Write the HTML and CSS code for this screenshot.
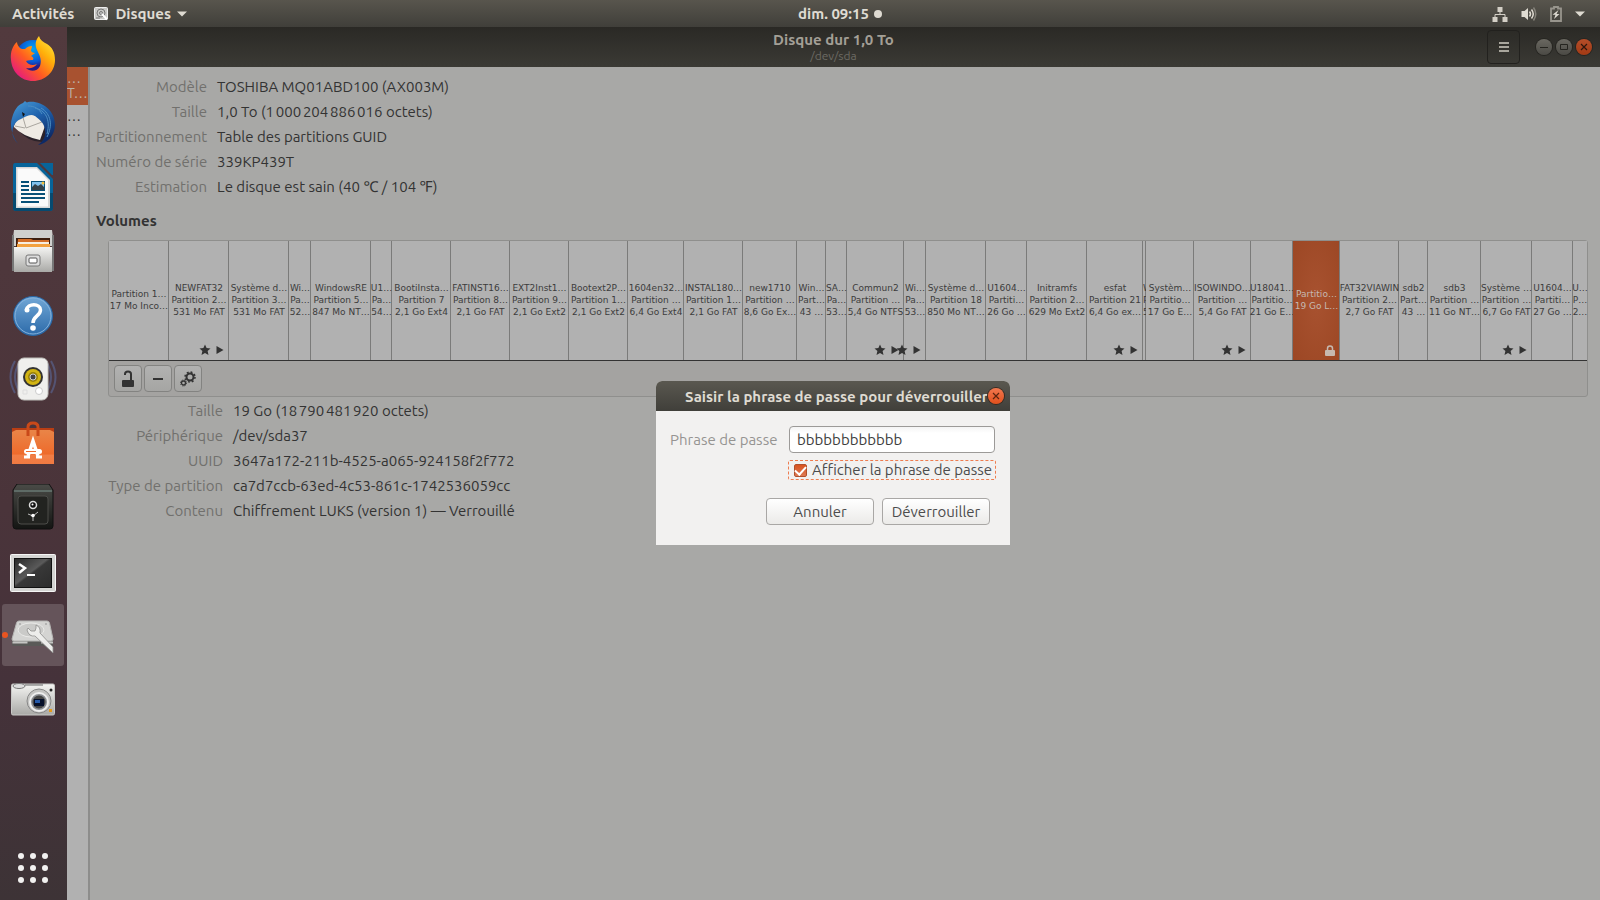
FILE: index.html
```
<!DOCTYPE html>
<html lang="fr">
<head>
    <meta charset="utf-8">
    <title>Disques</title>
    <link rel="stylesheet" href="styles.css">
</head>
<body>
    <svg class="defs" aria-hidden="true">
        <defs>
            <symbol id="star" viewBox="0 0 12 12"><path d="M6 0.5l1.6 3.6 3.9.4-2.9 2.6.9 3.9L6 9l-3.5 2 .9-3.9L.5 4.500l3.900-.4z"/></symbol>
            <symbol id="play" viewBox="0 0 8 10"><path d="M0.5 1l7 4-7 4z"/></symbol>
            <linearGradient id="metal" x2="0" y2="1"><stop offset="0" stop-color="#f4f4f2"/><stop offset="1" stop-color="#a9a9a6"/></linearGradient>
            <linearGradient id="fox" x1="1" y1="0" x2="0.1" y2="0.9"><stop offset="0" stop-color="#fff44f"/><stop offset="0.35" stop-color="#ffb10a"/><stop offset="0.65" stop-color="#ff5b22"/><stop offset="1" stop-color="#e31587"/></linearGradient>
            <radialGradient id="globe" cx="0.5" cy="0.25"><stop offset="0" stop-color="#00a5f5"/><stop offset="0.7" stop-color="#0a5ad6"/><stop offset="1" stop-color="#2a1c85"/></radialGradient>
            <linearGradient id="bird" x2="0.6" y2="1"><stop offset="0" stop-color="#4ba0da"/><stop offset="0.5" stop-color="#1f62ad"/><stop offset="1" stop-color="#0d2a66"/></linearGradient>
            <linearGradient id="help" x2="0" y2="1"><stop offset="0" stop-color="#71a7d6"/><stop offset="1" stop-color="#2c6aa9"/></linearGradient>
            <linearGradient id="bag" x2="0" y2="1"><stop offset="0" stop-color="#e98548"/><stop offset="0.7" stop-color="#ee6b2c"/><stop offset="0.75" stop-color="#f17e46"/><stop offset="1" stop-color="#ef7a42"/></linearGradient>
            <linearGradient id="dark" x2="0" y2="1"><stop offset="0" stop-color="#4a4b47"/><stop offset="1" stop-color="#141513"/></linearGradient>
            <linearGradient id="screen" x2="1" y2="1"><stop offset="0" stop-color="#2a2a2a"/><stop offset="0.45" stop-color="#5a5a5a"/><stop offset="0.5" stop-color="#383838"/><stop offset="1" stop-color="#2c2c2c"/></linearGradient>
        </defs>
    </svg>

    <header class="topbar">
        <div class="topbar-left">
            <a href="#" class="activities">Activités</a>
            <a href="#" class="app-menu">
                <svg width="15" height="14" viewBox="0 0 15 14"><rect x="0.5" y="0.5" width="13" height="12" rx="1" fill="#c9c9c6" stroke="#eee"/><circle cx="7" cy="6" r="4" fill="none" stroke="#777"/><circle cx="7" cy="6" r="1.5" fill="none" stroke="#777"/><path d="M8 7l5 5.500" stroke="#fff" stroke-width="2"/><path d="M2 11h4" stroke="#777"/></svg>
                Disques
                <svg width="10" height="6" viewBox="0 0 10 6"><path d="M0 0.500h10L5 5.500z" fill="#dfdbd2"/></svg>
            </a>
        </div>
        <div class="clock">dim. 09:15</div>
        <div class="status">
            <svg width="16" height="16" viewBox="0 0 16 16" fill="#d3cfc6"><path d="M5.500 1h5v5h-5zM.5 11h5v5h-5zM10.500 11h5v5h-5z"/><path d="M8 5v3.500M3 12V8.500h10V12" fill="none" stroke="#d3cfc6"/></svg>
            <svg width="16" height="16" viewBox="0 0 16 16"><path d="M0.500 5h3L7 2v12l-3.500-3h-3z" fill="#dfdbd2"/><path d="M8.500 5.500q2 2.500 0 5M10.500 3.500q3.500 4.500 0 9" fill="none" stroke="#dfdbd2" stroke-width="1.500"/><path d="M12.500 1.500q4.500 6.500 0 13" fill="none" stroke="#85827a" stroke-width="1.500"/></svg>
            <svg width="12" height="16" viewBox="0 0 12 16"><path d="M4 1h4v1.500h3v12.500H1V2.500h3z" fill="none" stroke="#98958d" stroke-width="1.800"/><path d="M8.500 4L2.500 8.800h3L4 13l5.500-5h-3z" fill="#dfdbd2"/></svg>
            <svg width="10" height="6" viewBox="0 0 10 6"><path d="M0 0.500h10L5 5.500z" fill="#dfdbd2"/></svg>
        </div>
    </header>

    <div class="desktop">
        <nav class="dock">
            <a href="#" class="dock-item" aria-label="Firefox">
                <svg width="46" height="46" viewBox="0 0 46 46"><circle cx="23" cy="22" r="18" fill="url(#globe)"/><path d="M29 0c-4 5-4 9-2 14 3 6 5 10 3 16-3 6-10 6-14 2 4 1 8 0 11-4-4 2-9 1-11-3 2-1 5-1 7-1 1-2 0-3-2-4l4-3c-2 0-3-1-4-2 0-2 1-3 1-5-3 0-5 1-7 3-2 0-4 0-5-1-2-2-3-4-3-6C3 9 0 16 1 24c1 12 10 21 22 21s22-9 22-21c0-8-3-13-8-16C33 6 30 4 29 0z" fill="url(#fox)"/></svg>
            </a>
            <a href="#" class="dock-item" aria-label="Thunderbird">
                <svg width="46" height="46" viewBox="0 0 46 46"><path d="M8 30q10 12 24 12l6-8-4-14z" fill="#2b2229"/><path d="M4 26Q8 14 20 14l14 4 1 8-5 14Q12 36 4 27z" fill="#efebe4"/><path d="M12 14l4 14 16-6M15 28l-10-2" fill="none" stroke="#aaa69f"/><path d="M13 3l2-2c1 1 2 2 3 1 13-2 27 8 27 23 0 10-8 19-17 20 6-4 8-9 7-15-1-7-4-9-10-14-5-3-10 1-14 3-3 1-6 3-8 9-2 7 1 11 5 16C3 37-1 27 2 18 4 11 7 5 13 3z" fill="url(#bird)"/><path d="M25 8c10 2 16 11 12 26M31 8c10 6 12 17 6 29M18 6c7 0 11 3 14 8" fill="none" stroke="#4d8fc4"/><path d="M12 12l3 2-2 3z" fill="#111"/></svg>
            </a>
            <a href="#" class="dock-item" aria-label="LibreOffice Writer">
                <svg width="42" height="48" viewBox="0 0 42 48"><path d="M3 0h22l16 16v29q0 3-3 3H4q-3 0-3-3V3q0-3 2-3z" fill="#07649a"/><path d="M1 30h40v15q0 3-3 3H4q-3 0-3-3z" fill="#064a70"/><path d="M28 0h13v12h-1z" fill="#07649a"/><path d="M4 4h21l13 13v28H4z" fill="#d7d7d7"/><path d="M5.500 5.500h19L36 17v26.500H5.500z" fill="#fafafa"/><path d="M9 19h8M9 23h8M9 27h8M9 31h24M9 35h24M9 39h18" stroke="#075078" stroke-width="2"/><path d="M19 18h14v10H19z" fill="#075078"/><path d="M20 19h12v8H20z" fill="#82c3ef"/><path d="M20 27v-3l3-3 3 2 3-2 3 3v3z" fill="#354148"/><circle cx="31" cy="20" r="1.500" fill="#f4be3a"/></svg>
            </a>
            <a href="#" class="dock-item" aria-label="Fichiers">
                <svg width="42" height="44" viewBox="0 0 42 44"><path d="M2 1h38l2 16H0z" fill="#cfcfcd"/><path d="M4 9h34v10H4z" fill="#3c1e0f"/><path d="M6 10h13l2 1h16v8H5z" fill="#d26d28"/><path d="M6 13h31v4H6z" fill="#f6eddf"/><path d="M5 15h33v4H5z" fill="#f3a13e"/><path d="M0 6h2v36H0zM40 6h2v36h-2z" fill="#777"/><path d="M2 18h38v25H2z" fill="url(#metal)"/><rect x="14" y="26" width="14" height="11" rx="2" fill="#ddd" stroke="#777"/><rect x="17" y="29" width="8" height="5" rx="1" fill="#fff" stroke="#555"/></svg>
            </a>
            <a href="#" class="dock-item" aria-label="Aide">
                <svg width="42" height="44" viewBox="0 -2 42 44"><circle cx="21" cy="21" r="19.500" fill="url(#help)" stroke="#2767a7"/><circle cx="21" cy="21" r="18" fill="none" stroke="#84b2dc"/><path d="M14.500 15c1-7 14-7 14 0 0 6-7.500 6-7.500 13" fill="none" stroke="#fff" stroke-width="3.500"/><circle cx="15" cy="15" r="2.500" fill="#fff"/><circle cx="21" cy="33" r="2.800" fill="#fff"/></svg>
            </a>
            <a href="#" class="dock-item" aria-label="Rhythmbox">
                <svg width="48" height="46" viewBox="0 0 48 46"><g fill="none" stroke="#59618c" stroke-width="2" opacity="0.700"><path d="M6 5q-9 16 0 32M10 7q-8 14 0 28M42 5q9 16 0 32M38 7q8 14 0 28"/></g><rect x="9" y="2" width="30" height="42" rx="6" fill="#efefed" stroke="#bebeba"/><circle cx="24" cy="21" r="10" fill="#333"/><circle cx="24" cy="21" r="8" fill="#d2b413"/><circle cx="24" cy="21" r="5" fill="#9b830b"/><circle cx="24" cy="21" r="3" fill="#444" stroke="#ccc"/><circle cx="30" cy="35" r="3.500" fill="#fff" stroke="#ccc"/><path d="M14 34h4v4h-4z" fill="none" stroke="#ddd"/></svg>
            </a>
            <a href="#" class="dock-item" aria-label="Logiciels Ubuntu">
                <svg width="42" height="44" viewBox="0 0 42 44"><path d="M0 7h42v7H0z" fill="#b93e14"/><path d="M0 11l4-2h34l4 2v32H0z" fill="url(#bag)"/><path d="M16 15V6q0-4 5-4t5 4v9" fill="none" stroke="#c94919" stroke-width="3"/><path d="M16 35l5-15 5 15" fill="none" stroke="#fff" stroke-width="3.500"/><path d="M12 36h6M24 36h6" stroke="#fff" stroke-width="3"/><rect x="12" y="28" width="18" height="5" rx="2.500" fill="#fff"/><path d="M14 30.500h10" stroke="#ef6c2e"/></svg>
            </a>
            <a href="#" class="dock-item" aria-label="Coffre">
                <svg width="42" height="46" viewBox="0 0 42 46"><path d="M5 0h32l4 6v36q0 3-3 3H4q-3 0-3-3V6z" fill="url(#dark)" stroke="#111"/><path d="M2 6h38v2H2z" fill="#5e6b66"/><rect x="6" y="12" width="30" height="28" rx="3" fill="#222320" stroke="#4c4d49"/><circle cx="21" cy="21" r="3.500" fill="#111" stroke="#ddd" stroke-width="1.500"/><circle cx="20.500" cy="20.500" r="1" fill="#fff"/><path d="M21 32v5M21 32l-5-2M21 32l5-4" stroke="#bbb"/><circle cx="21" cy="31.500" r="1.800" fill="#fff"/></svg>
            </a>
            <a href="#" class="dock-item" aria-label="Terminal">
                <svg width="46" height="42" viewBox="0 -4 46 42"><rect x="0.500" y="0.500" width="45" height="37" rx="1" fill="#d4d4d2" stroke="#f5f5f5"/><rect x="4" y="4" width="38" height="30" fill="#111"/><rect x="5" y="5" width="36" height="28" fill="url(#screen)"/><path d="M9 10l6 4-6 5" fill="none" stroke="#fff" stroke-width="2.500"/><path d="M17 21h8" stroke="#fff" stroke-width="2"/></svg>
            </a>
            <a href="#" class="dock-item dock-item-active" aria-label="Disques">
                <svg width="44" height="36" viewBox="0 0 44 36"><path d="M1 23h41v5q0 1-2 1H3q-2 0-2-1z" fill="#5a5a58"/><path d="M8 4h28q2 0 2.500 2L42 22q0 2-2 2H3q-2 0-2-2L5.500 6Q6 4 8 4z" fill="#d4d4d2" stroke="#b5b5b3"/><ellipse cx="20" cy="13" rx="13" ry="7" fill="#cacac8" stroke="#e9e9e7"/><path d="M1.500 25.500h15M30 25.500h12" stroke="#c5c5c3" stroke-width="2"/><circle cx="9" cy="7" r="0.800" fill="#888"/><circle cx="35" cy="7" r="0.800" fill="#888"/><path d="M25 8q5 2 4 8l13 14v6L24 19q-6 1-8-6l1-2 3 3 4 0 1-3z" fill="#ededeb" stroke="#8d8d8b" stroke-width="0.800"/></svg>
            </a>
            <a href="#" class="dock-item" aria-label="Photos">
                <svg width="44" height="34" viewBox="0 0 44 34"><rect x="0.500" y="2" width="43" height="31" rx="1.500" fill="url(#metal)" stroke="#c8c8c6"/><path d="M14 3h18" stroke="#666"/><ellipse cx="8" cy="4" rx="6" ry="2.500" fill="#ddd" stroke="#777"/><circle cx="40" cy="8" r="1.500" fill="#222"/><path d="M38 27h3v3h-3z" fill="#e69a18"/><circle cx="28" cy="19" r="12" fill="#c4c4c2" stroke="#888"/><circle cx="28" cy="20" r="9" fill="#8b8e92" stroke="#eee" stroke-width="2"/><circle cx="28" cy="20" r="6.500" fill="#444"/><path d="M23 17h10v7H23z" fill="#06102a"/><path d="M24 18h5v3h-5z" fill="#2458a8"/></svg>
            </a>
            <a href="#" class="dock-item show-apps" aria-label="Afficher les applications">
                <svg width="32" height="32" viewBox="0 0 32 32" fill="#f2f1f0"><circle cx="4" cy="4" r="3"/><circle cx="16" cy="4" r="3"/><circle cx="28" cy="4" r="3"/><circle cx="4" cy="16" r="3"/><circle cx="16" cy="16" r="3"/><circle cx="28" cy="16" r="3"/><circle cx="4" cy="28" r="3"/><circle cx="16" cy="28" r="3"/><circle cx="28" cy="28" r="3"/></svg>
            </a>
        </nav>

        <main class="window">
            <header class="titlebar">
                <div class="window-title">
                    <h1>Disque dur 1,0 To</h1>
                    <p>/dev/sda</p>
                </div>
                <div class="window-controls">
                    <button class="menu-button" aria-label="Menu"><svg width="10" height="10" viewBox="0 0 10 10"><path d="M0 1h10M0 5h10M0 9h10" stroke="#a9a69d" stroke-width="2"/></svg></button>
                    <button class="round" aria-label="Réduire"><svg width="16" height="16" viewBox="0 0 16 16"><path d="M4 8.500h8" stroke="#25241f"/></svg></button>
                    <button class="round" aria-label="Agrandir"><svg width="16" height="16" viewBox="0 0 16 16"><path d="M4.500 5.500h7v5h-7z" fill="none" stroke="#25241f"/></svg></button>
                    <button class="round round-close" aria-label="Fermer"><svg width="16" height="16" viewBox="0 0 16 16"><path d="M5 5l6 6M11 5l-6 6" stroke="#2d160d" stroke-width="1.200"/></svg></button>
                </div>
            </header>

            <div class="window-body">
                <aside class="drives">
                    <a href="#" class="drive drive-selected"><span>…</span><span>T…</span></a>
                    <a href="#" class="drive"><span>…</span><span>…</span></a>
                </aside>

                <section class="details">
                    <dl class="info">
                        <dt>Modèle</dt><dd>TOSHIBA MQ01ABD100 (AX003M)</dd>
                        <dt>Taille</dt><dd>1,0 To (1&#8239;000&#8239;204&#8239;886&#8239;016 octets)</dd>
                        <dt>Partitionnement</dt><dd>Table des partitions GUID</dd>
                        <dt>Numéro de série</dt><dd>339KP439T</dd>
                        <dt>Estimation</dt><dd>Le disque est sain (40 ℃ / 104 ℉)</dd>
                    </dl>

                    <h2>Volumes</h2>
                    <div class="volumes">
                        <div class="partitions">
                            <div class="part" style="flex-grow: 60"><p>Partition 1…<br>17 Mo Inco…</p></div>
                            <div class="part" style="flex-grow: 60"><p>NEWFAT32<br>Partition 2…<br>531 Mo FAT</p><span class="flags"><svg class="star"><use href="#star"/></svg><svg class="play"><use href="#play"/></svg></span></div>
                            <div class="part" style="flex-grow: 60"><p>Système d…<br>Partition 3…<br>531 Mo FAT</p></div>
                            <div class="part" style="flex-grow: 22"><p>Wi…<br>Pa…<br>52…</p></div>
                            <div class="part" style="flex-grow: 60"><p>WindowsRE<br>Partition 5…<br>847 Mo NT…</p></div>
                            <div class="part" style="flex-grow: 21"><p>U1…<br>Pa…<br>54…</p></div>
                            <div class="part" style="flex-grow: 59"><p>BootiInsta…<br>Partition 7<br>2,1 Go Ext4</p></div>
                            <div class="part" style="flex-grow: 59"><p>FATINST16…<br>Partition 8…<br>2,1 Go FAT</p></div>
                            <div class="part" style="flex-grow: 59"><p>EXT2Inst1…<br>Partition 9…<br>2,1 Go Ext2</p></div>
                            <div class="part" style="flex-grow: 59"><p>Bootext2P…<br>Partition 1…<br>2,1 Go Ext2</p></div>
                            <div class="part" style="flex-grow: 56"><p>1604en32…<br>Partition …<br>6,4 Go Ext4</p></div>
                            <div class="part" style="flex-grow: 59"><p>INSTAL180…<br>Partition 1…<br>2,1 Go FAT</p></div>
                            <div class="part" style="flex-grow: 54"><p>new1710<br>Partition …<br>8,6 Go Ex…</p></div>
                            <div class="part" style="flex-grow: 29"><p>Win…<br>Part…<br>43 …</p></div>
                            <div class="part" style="flex-grow: 21"><p>SA…<br>Pa…<br>53…</p></div>
                            <div class="part" style="flex-grow: 57"><p>Commun2<br>Partition …<br>5,4 Go NTFS</p><span class="flags"><svg class="star"><use href="#star"/></svg><svg class="play"><use href="#play"/></svg></span></div>
                            <div class="part" style="flex-grow: 22"><p>Wi…<br>Pa…<br>53…</p><span class="flags"><svg class="star"><use href="#star"/></svg><svg class="play"><use href="#play"/></svg></span></div>
                            <div class="part" style="flex-grow: 60"><p>Système d…<br>Partition 18<br>850 Mo NT…</p></div>
                            <div class="part" style="flex-grow: 41"><p>U1604…<br>Partiti…<br>26 Go …</p></div>
                            <div class="part" style="flex-grow: 60"><p>Initramfs<br>Partition 2…<br>629 Mo Ext2</p></div>
                            <div class="part" style="flex-grow: 56"><p>esfat<br>Partition 21<br>6,4 Go ex…</p><span class="flags"><svg class="star"><use href="#star"/></svg><svg class="play"><use href="#play"/></svg></span></div>
                            <div class="part part-sliver" style="flex-grow: 3"><p>W<br>P<br>5</p></div>
                            <div class="part" style="flex-grow: 48"><p>Systèm…<br>Partitio…<br>17 Go E…</p></div>
                            <div class="part" style="flex-grow: 57"><p>ISOWINDO…<br>Partition …<br>5,4 Go FAT</p><span class="flags"><svg class="star"><use href="#star"/></svg><svg class="play"><use href="#play"/></svg></span></div>
                            <div class="part" style="flex-grow: 42"><p>U18041…<br>Partitio…<br>21 Go E…</p></div>
                            <div class="part part-selected" style="flex-grow: 47"><p>Partitio…<br>19 Go L…</p><span class="flags"><svg width="10" height="11" viewBox="0 0 10 11"><path d="M2.500 6V3.500q0-2.500 2.500-2.500t2.500 2.500V6" fill="none" stroke="#c6b9b0" stroke-width="1.500"/><rect y="5" width="10" height="6" rx="1"/></svg></span></div>
                            <div class="part" style="flex-grow: 59"><p>FAT32VIAWIN<br>Partition 2…<br>2,7 Go FAT</p></div>
                            <div class="part" style="flex-grow: 29"><p>sdb2<br>Part…<br>43 …</p></div>
                            <div class="part" style="flex-grow: 53"><p>sdb3<br>Partition …<br>11 Go NT…</p></div>
                            <div class="part" style="flex-grow: 51"><p>Système …<br>Partition …<br>6,7 Go FAT</p><span class="flags"><svg class="star"><use href="#star"/></svg><svg class="play"><use href="#play"/></svg></span></div>
                            <div class="part" style="flex-grow: 41"><p>U1604…<br>Partiti…<br>27 Go …</p></div>
                            <div class="part" style="flex-grow: 14"><p>U…<br>P…<br>2…</p></div>
                        </div>
                        <div class="toolbar">
                            <button aria-label="Déverrouiller la partition"><svg width="14" height="18" viewBox="0 0 14 18"><path d="M4 5V4q0-2.500 3-2.500t3 2.500v6" fill="none" stroke="#333" stroke-width="2"/><rect x="1" y="10" width="12" height="7" rx="1" fill="#333"/></svg></button>
                            <button aria-label="Supprimer la partition"><svg width="10" height="2" viewBox="0 0 10 2"><path d="M0 1h10" stroke="#333" stroke-width="2"/></svg></button>
                            <button aria-label="Options de partition"><svg width="16" height="16" viewBox="0 0 16 16" fill="none" stroke="#333"><circle cx="10" cy="6" r="3.500" stroke-width="2"/><circle cx="10" cy="6" r="5" stroke-width="1.500" stroke-dasharray="1.900 2.027"/><circle cx="3.500" cy="12" r="2" stroke-width="1.300"/><circle cx="3.500" cy="12" r="3" stroke-dasharray="1.200 1.156"/></svg></button>
                        </div>
                    </div>

                    <dl class="info info-volume">
                        <dt>Taille</dt><dd>19 Go (18&#8239;790&#8239;481&#8239;920 octets)</dd>
                        <dt>Périphérique</dt><dd>/dev/sda37</dd>
                        <dt>UUID</dt><dd>3647a172-211b-4525-a065-924158f2f772</dd>
                        <dt>Type de partition</dt><dd>ca7d7ccb-63ed-4c53-861c-1742536059cc</dd>
                        <dt>Contenu</dt><dd>Chiffrement LUKS (version 1) — Verrouillé</dd>
                    </dl>
                </section>
            </div>

            <div class="overlay">
                <form class="dialog" role="dialog" aria-labelledby="dialog-title">
                    <header class="dialog-header">
                        <h2 id="dialog-title">Saisir la phrase de passe pour déverrouiller</h2>
                        <button type="button" class="round dialog-close" aria-label="Fermer"><svg width="16" height="16" viewBox="0 0 16 16"><path d="M5 5l6 6M11 5l-6 6" stroke="#5b2410" stroke-width="1.200"/></svg></button>
                    </header>
                    <div class="dialog-fields">
                        <label for="passphrase" class="field-label">Phrase de passe</label>
                        <input type="text" id="passphrase" class="entry" value="bbbbbbbbbbbb">
                        <label class="show-pass"><input type="checkbox" checked>Afficher la phrase de passe</label>
                    </div>
                    <div class="dialog-actions">
                        <button type="button">Annuler</button>
                        <button type="button">Déverrouiller</button>
                    </div>
                </form>
            </div>
        </main>
    </div>
</body>
</html>
```
FILE: styles.css
```
* {
    box-sizing: border-box;
}
body {
    margin: 0;
    min-height: 100vh;
    display: flex;
    flex-direction: column;
    font-family: Ubuntu, "Noto Sans", sans-serif;
    font-size: 15px;
    line-height: 25px;
    color: #333;
    background: #a8a8a6;
}
h1, h2, p, dl, dd {
    margin: 0;
}
h1, h2 {
    font-size: 15px;
}
a {
    color: inherit;
    text-decoration: none;
}
button, input {
    font: inherit;
    color: inherit;
    margin: 0;
    padding: 0;
}
svg {
    display: block;
    flex-shrink: 0;
}
.defs {
    position: absolute;
    width: 0;
    height: 0;
}

/* top panel */
.topbar {
    display: flex;
    height: 27px;
    line-height: 27px;
    font-weight: bold;
    color: #dfdbd2;
    background: linear-gradient(#58554d, #403f3a);
}
.topbar-left {
    flex: 1 1 82px;
    display: flex;
    gap: 20px;
    padding-left: 12px;
}
.app-menu {
    display: flex;
    align-items: center;
    gap: 6px;
}
.clock {
    display: flex;
    align-items: center;
    gap: 5px;
}
.clock::before, .clock::after {
    content: "";
    width: 8px;
    height: 8px;
    border-radius: 50%;
}
.clock::after {
    background: #dfdbd2;
}
.status {
    flex: 1 1 15px;
    display: flex;
    align-items: center;
    justify-content: flex-end;
    gap: 13px;
    padding-right: 15px;
}

/* dock */
.desktop {
    flex: 1;
    display: flex;
}
.dock {
    width: 67px;
    display: flex;
    flex-direction: column;
    gap: 2px;
    padding: 1px 3px 1px 2px;
    background: linear-gradient(#523a3e, #4a343a 55%, #45323a 75%, #3d3336);
}
.dock-item {
    height: 62px;
    display: flex;
    align-items: center;
    justify-content: center;
    border-radius: 3px;
}
.dock-item-active {
    position: relative;
    background: #65545a;
}
.dock-item-active::before {
    content: "";
    position: absolute;
    left: 0;
    top: 28px;
    width: 6px;
    height: 6px;
    border-radius: 50%;
    background: #e95420;
}
.show-apps {
    margin-top: auto;
}

/* main window, dimmed by the modal dialog */
.window {
    position: relative;
    flex: 1;
    min-width: 0;
    display: flex;
    flex-direction: column;
}
.titlebar {
    display: grid;
    grid-template-columns: 1fr auto 1fr;
    align-items: center;
    height: 40px;
    padding: 0 8px;
    background: linear-gradient(#2a2925, #3b3a35);
}
.window-title {
    grid-column: 2;
    text-align: center;
    line-height: 16px;
    color: #a39f96;
}
.window-title p {
    font-size: 12px;
    line-height: 15px;
    color: #6c6a63;
}
.window-controls {
    display: flex;
    align-items: center;
    justify-content: flex-end;
    gap: 4px;
}
.menu-button {
    width: 33px;
    height: 34px;
    margin-right: 12px;
    display: flex;
    align-items: center;
    justify-content: center;
    background: none;
    border: 1px solid #22211e;
    border-radius: 4px;
}
.round {
    width: 16px;
    height: 16px;
    border: none;
    border-radius: 50%;
    background: linear-gradient(#6a6861, #4b4a45);
    box-shadow: 0 0 0 1px #262521;
}
.round-close {
    background: linear-gradient(#b44d29, #a33a14);
}
.window-body {
    flex: 1;
    display: flex;
}
.drives {
    width: 23px;
    border-right: 2px solid #8d8d8c;
    background: #b1b1b1;
    overflow: hidden;
}
.drive {
    display: flex;
    flex-direction: column;
    height: 38px;
    padding-top: 4px;
    font-size: 14px;
    line-height: 15px;
}
.drive-selected {
    color: #bdb3a8;
    background: #a85230;
}
.details {
    flex: 1;
    min-width: 0;
    padding: 7px 12px 0 6px;
}
.info {
    display: grid;
    grid-template-columns: 111px 1fr;
    column-gap: 10px;
}
.info dt {
    text-align: right;
    white-space: nowrap;
    color: #71706d;
}
.details h2 {
    margin: 9px 0 7px;
}
.volumes {
    margin-left: 12px;
    border: 1px solid #8f8f8d;
    border-radius: 3px;
    background: #a4a3a1;
}
.info-volume {
    margin-top: 1px;
    grid-template-columns: 127px 1fr;
}
.partitions {
    display: flex;
    height: 120px;
    border-bottom: 1px solid #333;
    background: #b1b1b1;
}
.part {
    position: relative;
    flex: 1 1 0;
    min-width: 0;
    display: flex;
    align-items: center;
    justify-content: center;
    padding-bottom: 2px;
    box-shadow: inset -1px 0 #7b7b7a;
    font: 9px/12px "DejaVu Sans", sans-serif;
    text-align: center;
    white-space: nowrap;
    color: #3c3c3c;
}
.part:last-child {
    box-shadow: none;
}
.part p {
    flex: none;
}
.part-sliver {
    overflow: hidden;
    justify-content: flex-start;
    text-align: left;
}
.part-selected {
    background: radial-gradient(#a85230, #9c4724);
    color: #c6b9b0;
}
.flags {
    position: absolute;
    right: 5px;
    bottom: 4px;
    display: flex;
    align-items: center;
    gap: 5px;
    fill: #333;
}
.part-selected .flags {
    fill: #c6b9b0;
}
.star {
    width: 12px;
    height: 12px;
}
.play {
    width: 8px;
    height: 10px;
}
.toolbar {
    display: flex;
    gap: 2px;
    padding: 4px 5px;
}
.toolbar button {
    width: 28px;
    height: 27px;
    display: flex;
    align-items: center;
    justify-content: center;
    border: 1px solid #838381;
    border-radius: 4px;
    background: linear-gradient(#b2b2b1, #a5a5a3);
}

/* passphrase dialog */
.overlay {
    position: absolute;
    inset: 0;
    display: flex;
    align-items: center;
    justify-content: center;
    padding: 0 1px 1px 0;
}
.dialog {
    width: 354px;
    background: #f2f1f0;
    border-radius: 6px 6px 0 0;
    color: #4c4c4c;
}
.dialog-header {
    display: flex;
    align-items: center;
    justify-content: flex-end;
    height: 30px;
    padding-right: 6px;
    border-radius: 6px 6px 0 0;
    color: #dfdbd2;
    background: linear-gradient(#5a5850, #403f3a);
}
.dialog-header h2 {
    white-space: nowrap;
}
.dialog-close {
    background: linear-gradient(#f2784f, #e2501c);
    box-shadow: 0 0 0 1px #3a2a20;
}
.dialog-fields {
    display: grid;
    grid-template-columns: 1fr 208px;
    align-items: center;
    gap: 7px 10px;
    padding: 15px 14px 0;
}
.field-label {
    white-space: nowrap;
    color: #969492;
}
.entry {
    height: 27px;
    margin: 0 1px;
    padding: 0 7px;
    border: 1px solid #9c9a98;
    border-radius: 4px;
    background: linear-gradient(#f4f4f4, #fff 6px);
    color: #3c3c3c;
    outline: none;
}
.show-pass {
    grid-column: 2;
    display: flex;
    align-items: center;
    gap: 5px;
    height: 20px;
    padding: 0 4px 0 5px;
    border: 1px dashed #ee7d50;
    border-radius: 2px;
    line-height: 18px;
    white-space: nowrap;
}
.show-pass input {
    appearance: none;
    flex-shrink: 0;
    width: 13px;
    height: 13px;
    border: 1px solid #b0502c;
    border-radius: 2px;
    background: linear-gradient(#d9531f, #dd7a54);
    display: grid;
    place-items: center;
}
.show-pass input:checked::before {
    content: "";
    width: 9px;
    height: 5px;
    border-left: 2px solid #fff;
    border-bottom: 2px solid #fff;
    transform: translateY(-1px) rotate(-48deg);
}
.dialog-actions {
    display: flex;
    justify-content: flex-end;
    gap: 8px;
    padding: 18px 20px 20px;
}
.dialog-actions button {
    width: 108px;
    height: 27px;
    border: 1px solid #a9a7a5;
    border-radius: 4px;
    background: linear-gradient(#fff, #ebeae8);
}
```
